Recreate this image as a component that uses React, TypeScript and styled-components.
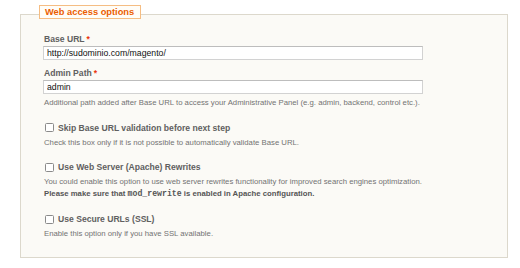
import React from "react";
import styled, { createGlobalStyle } from "styled-components";

const Global = createGlobalStyle`
  html, body { margin: 0; padding: 0; background: #ffffff; }
  body { font-family: "Liberation Sans", Arial, sans-serif; }
`;

const Card = styled.section`
  box-sizing: border-box;
  width: 488px;
  height: 244px;
  margin: 14px 0 0 20px;
  padding: 0 22px 0 23px;
  border: 1px solid #dcd8cc;
  background: #fbfaf6;
`;

const Legend = styled.h2`
  box-sizing: border-box;
  display: block;
  width: fit-content;
  height: 14px;
  margin: -10px 0 0 -5px;
  padding: 0 6px 0 5px;
  border: 1px solid #f5bd83;
  background: #fffdf8;
  color: #eb5e00;
  font-size: 9.3px;
  font-weight: bold;
  line-height: 12px;
`;

const Field = styled.div<{ $top: number }>`
  display: flex;
  flex-direction: column;
  margin-top: ${(p) => p.$top}px;
`;

const Label = styled.label`
  display: block;
  height: 12px;
  color: #606060;
  font-size: 8.6px;
  font-weight: bold;
  line-height: 12px;
`;

const Req = styled.span`
  color: #eb340a;
  margin-left: 2px;
`;

const Input = styled.input`
  box-sizing: border-box;
  width: 380px;
  height: 14px;
  margin: 1px 0 0 -1px;
  padding: 0 3px;
  border: 1px solid #d2d2d2;
  border-top-color: #bdbdbd;
  background: #ffffff;
  color: #111111;
  font-family: "Liberation Sans", Arial, sans-serif;
  font-size: 8.7px;
  outline: none;
`;

const Note = styled.p<{ $top: number }>`
  margin: ${(p) => p.$top}px 0 0 0;
  color: #737373;
  font-size: 7.75px;
  line-height: 11.6px;
`;

const Strong = styled.strong`
  color: #555555;
  font-weight: bold;
`;

const Code = styled.code`
  font-family: "Liberation Mono", "Courier New", monospace;
  font-size: 8.2px;
  font-weight: bold;
  color: #555555;
`;

const CheckRow = styled.label<{ $top: number }>`
  display: flex;
  align-items: center;
  gap: 4px;
  height: 12px;
  margin-top: ${(p) => p.$top}px;
  color: #606060;
  font-size: 8.6px;
  font-weight: bold;
  line-height: 12px;
`;

const Box = styled.input`
  appearance: none;
  box-sizing: border-box;
  width: 9px;
  height: 9px;
  margin: 0 0 0 1px;
  border: 1px solid #8a8a8a;
  border-radius: 1.5px;
  background: #ffffff;
`;

export default function App() {
  return (
    <>
      <Global />
      <Card>
        <Legend>Web access options</Legend>
        <Field $top={14}>
          <Label>
            Base URL<Req>*</Req>
          </Label>
          <Input defaultValue="http://sudominio.com/magento/" />
        </Field>
        <Field $top={7}>
          <Label>
            Admin Path<Req>*</Req>
          </Label>
          <Input defaultValue="admin" />
        </Field>
        <Note $top={3}>
          Additional path added after Base URL to access your Administrative Panel (e.g. admin, backend, control etc.).
        </Note>

        <CheckRow $top={13}>
          <Box type="checkbox" />
          Skip Base URL validation before next step
        </CheckRow>
        <Note $top={3}>Check this box only if it is not possible to automatically validate Base URL.</Note>

        <CheckRow $top={13}>
          <Box type="checkbox" />
          Use Web Server (Apache) Rewrites
        </CheckRow>
        <Note $top={3}>
          You could enable this option to use web server rewrites functionality for improved search engines optimization.
          <br />
          <Strong>
            Please make sure that <Code>mod_rewrite</Code> is enabled in Apache configuration.
          </Strong>
        </Note>

        <CheckRow $top={14}>
          <Box type="checkbox" />
          Use Secure URLs (SSL)
        </CheckRow>
        <Note $top={3}>Enable this option only if you have SSL available.</Note>
      </Card>
    </>
  );
}
